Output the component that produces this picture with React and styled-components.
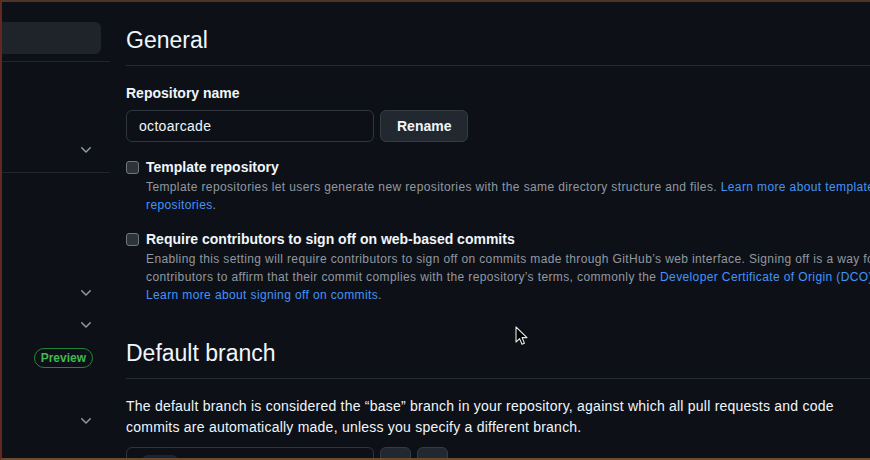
import React from "react";
import styled, { createGlobalStyle } from "styled-components";

const Global = createGlobalStyle`
  html, body { margin: 0; padding: 0; background: #0d1117; overflow: hidden; }
  * { box-sizing: border-box; }
  body { font-family: "Liberation Sans", Arial, sans-serif; color: #f0f6fc; }
`;

const Frame = styled.div`
  width: 870px;
  height: 460px;
  display: flex;
  align-items: flex-start;
  overflow: hidden;
  background: #0d1117;
  border-top: 2px solid #4f3427;
  border-left: 2px solid #62291f;
  border-bottom: 2px solid #6e4a2d;
  position: relative;
`;

const Sidebar = styled.nav`
  width: 108px;
  flex-shrink: 0;
  padding-top: 20px;
`;

const Selected = styled.div`
  height: 32px;
  margin-left: -12px;
  margin-right: 9px;
  margin-bottom: 7px;
  border-radius: 6px;
  background: #1f242b;
`;

const Divider = styled.div`
  height: 1px;
  background: #21262d;
`;

const Group = styled.div`
  padding: 10px 0 6px;
`;

const GroupHeading = styled.div`
  height: 30px;
`;

const NavRow = styled.div`
  height: ${(p) => p.$h || 32}px;
  display: flex;
  align-items: center;
  justify-content: flex-end;
  padding-right: 16px;
  color: #9198a1;
`;

const Badge = styled.span`
  display: inline-flex;
  align-items: center;
  height: 20px;
  padding: 0 6px;
  border: 1px solid #238636;
  border-radius: 2em;
  color: #3fb950;
  font-size: 12px;
  font-weight: 700;
  margin-right: 1px;
`;

const Main = styled.main`
  width: 760px;
  flex-shrink: 0;
  margin-left: 16px;
  padding-top: 23px;
`;

const Subhead = styled.div`
  padding-bottom: 10px;
  border-bottom: 1px solid #262c33;
  margin-top: ${(p) => p.$top || 0}px;
`;

const Heading = styled.h2`
  margin: 0;
  font-size: 23px;
  line-height: 30px;
  font-weight: 400;
  color: #f0f6fc;
`;

const Label = styled.div`
  margin-top: 17px;
  font-size: 14px;
  line-height: 21px;
  font-weight: 700;
  color: #f0f6fc;
`;

const InputRow = styled.div`
  display: flex;
  gap: 6px;
  margin-top: 6px;
`;

const TextInput = styled.div`
  width: 248px;
  height: 32px;
  border: 1px solid #30363d;
  border-radius: 6px;
  background: #0d1117;
  padding: 0 12px;
  display: flex;
  align-items: center;
  font-size: 14px;
  letter-spacing: 0.3px;
  color: #f0f6fc;
`;

const Button = styled.div`
  height: 32px;
  padding: 0 ${(p) => (p.$square ? 0 : 16)}px;
  width: ${(p) => (p.$square ? "31px" : "auto")};
  border: 1px solid #363c44;
  border-radius: 6px;
  background: #212830;
  display: flex;
  align-items: center;
  justify-content: center;
  font-size: 14px;
  font-weight: 700;
  color: #f0f6fc;
`;

const CheckRow = styled.div`
  display: flex;
  gap: 7px;
  margin-top: ${(p) => p.$top}px;
`;

const Box = styled.span`
  width: 13px;
  height: 13px;
  margin-top: 4px;
  flex-shrink: 0;
  border: 1px solid #6e7681;
  border-radius: 3px;
  background: #2d333b;
`;

const CheckBody = styled.div`
  flex: 1;
`;

const CheckTitle = styled.div`
  font-size: 14px;
  line-height: 21px;
  font-weight: 700;
  color: #f0f6fc;
`;

const Note = styled.p`
  margin: 0;
  font-size: 12px;
  line-height: 18px;
  letter-spacing: 0.38px;
  color: #9198a1;
`;

const Link = styled.a`
  color: #4493f8;
  text-decoration: none;
`;

const Para = styled.p`
  margin: 17px 0 0;
  font-size: 14px;
  line-height: 21px;
  letter-spacing: 0.23px;
  color: #f0f6fc;
`;

const BranchRow = styled(InputRow)`
  margin-top: 9px;
`;

const BranchPill = styled.span`
  display: inline-block;
  width: 36px;
  height: 22px;
  margin-top: 6px;
  margin-left: 3px;
  border-radius: 6px;
  background: #182539;
`;

const Cursor = styled.svg`
  position: absolute;
  left: 513px;
  top: 324px;
`;

const Chevron = () => (
  <svg width="16" height="16" viewBox="0 0 16 16" fill="currentColor">
    <path d="M12.78 5.22a.749.749 0 0 1 0 1.06l-4.25 4.25a.749.749 0 0 1-1.06 0L3.22 6.28a.749.749 0 1 1 1.06-1.06L8 8.939l3.72-3.719a.749.749 0 0 1 1.06 0Z" />
  </svg>
);

export default function App() {
  return (
    <>
      <Global />
      <Frame>
        <Sidebar>
          <Selected />
          <Divider />
          <Group>
            <GroupHeading />
            <NavRow />
            <NavRow>
              <Chevron />
            </NavRow>
          </Group>
          <Divider />
          <Group>
            <GroupHeading />
            <NavRow />
            <NavRow />
            <NavRow>
              <Chevron />
            </NavRow>
            <NavRow>
              <Chevron />
            </NavRow>
            <NavRow $h={34}>
              <Badge>Preview</Badge>
            </NavRow>
            <NavRow $h={30} />
            <NavRow>
              <Chevron />
            </NavRow>
            <NavRow />
          </Group>
        </Sidebar>
        <Main>
          <Subhead>
            <Heading>General</Heading>
          </Subhead>
          <Label>Repository name</Label>
          <InputRow>
            <TextInput>octoarcade</TextInput>
            <Button>Rename</Button>
          </InputRow>
          <CheckRow $top={15}>
            <Box />
            <CheckBody>
              <CheckTitle>Template repository</CheckTitle>
              <Note>
                Template repositories let users generate new repositories with the same directory structure and
                files. <Link>Learn more about template repositories</Link>.
              </Note>
            </CheckBody>
          </CheckRow>
          <CheckRow $top={15}>
            <Box />
            <CheckBody>
              <CheckTitle>Require contributors to sign off on web-based commits</CheckTitle>
              <Note>
                Enabling this setting will require contributors to sign off on commits made through GitHub’s web
                interface. Signing off is a way for contributors to affirm that their commit complies with the
                repository’s terms, commonly the <Link>Developer Certificate of Origin (DCO)</Link>.{" "}
                <Link>Learn more about signing off on commits</Link>.
              </Note>
            </CheckBody>
          </CheckRow>
          <Subhead $top={34}>
            <Heading>Default branch</Heading>
          </Subhead>
          <Para>
            The default branch is considered the “base” branch in your repository, against which all pull requests
            and code commits are automatically made, unless you specify a different branch.
          </Para>
          <BranchRow>
            <TextInput>
              <BranchPill />
            </TextInput>
            <Button $square />
            <Button $square />
          </BranchRow>
        </Main>
        <Cursor width="14" height="20" viewBox="0 0 14 20">
          <path d="M1 1 L1 16 L4.6 12.6 L7 18.2 L9.4 17.2 L7.1 11.6 L12 11.6 Z" fill="#000" stroke="#e6e6e6" strokeWidth="1.1" strokeLinejoin="round" />
        </Cursor>
      </Frame>
    </>
  );
}
